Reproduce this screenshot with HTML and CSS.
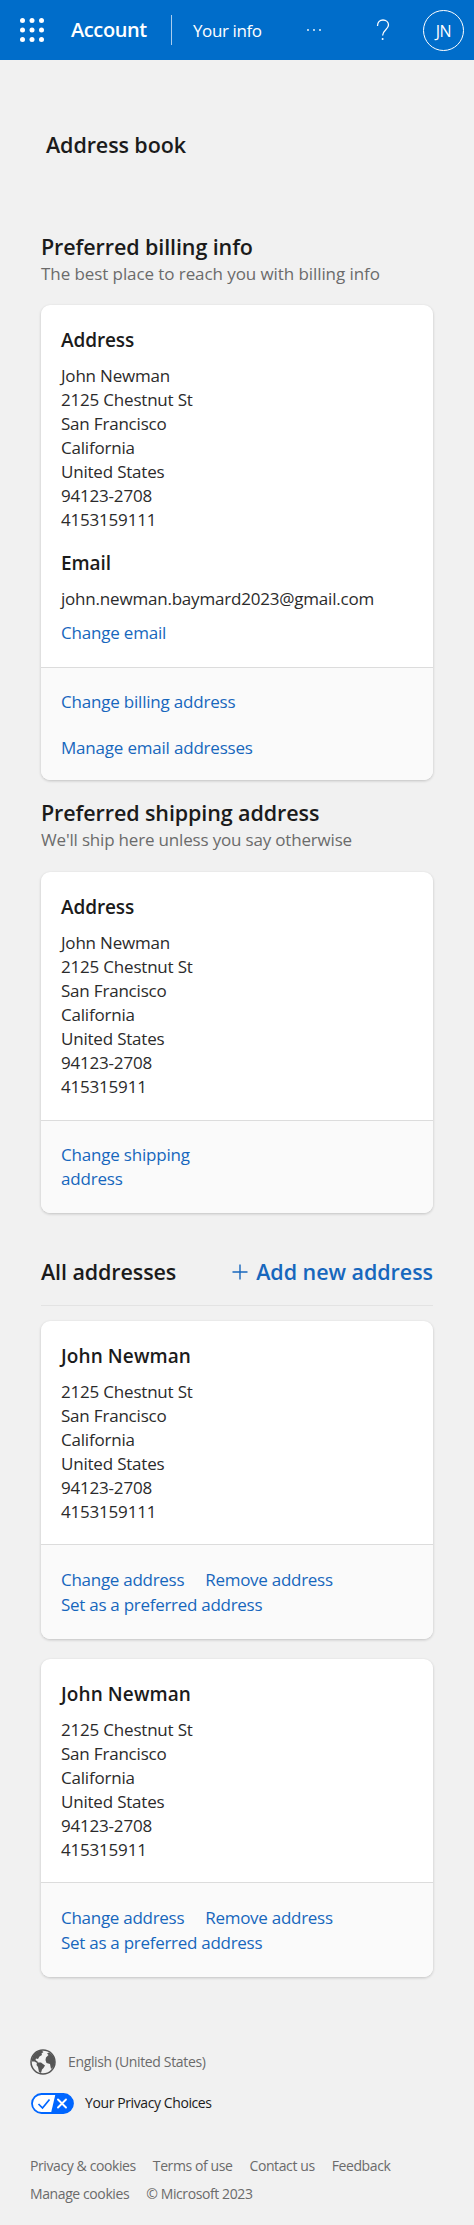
FILE: index.html
```html
<!DOCTYPE html>
<html lang="en">
<head>
<meta charset="UTF-8">
<meta name="viewport" content="width=device-width, initial-scale=1.0">
<title>Address book</title>
<link rel="stylesheet" href="styles.css">
</head>
<body>
<header class="topbar">
    <svg class="waffle" width="24" height="24" viewBox="0 0 24 24" fill="#fff">
        <circle cx="2.5" cy="2.5" r="2.5"/><circle cx="12" cy="2.5" r="2.5"/><circle cx="21.5" cy="2.5" r="2.5"/>
        <circle cx="2.5" cy="12" r="2.5"/><circle cx="12" cy="12" r="2.5"/><circle cx="21.5" cy="12" r="2.5"/>
        <circle cx="2.5" cy="21.5" r="2.5"/><circle cx="12" cy="21.5" r="2.5"/><circle cx="21.5" cy="21.5" r="2.5"/>
    </svg>
    <a class="brand">Account</a>
    <span class="separator"></span>
    <a class="nav-link">Your info</a>
    <svg class="more" width="16" height="4" viewBox="0 0 16 4" fill="#fff">
        <circle cx="2" cy="2" r=".9"/><circle cx="8" cy="2" r=".9"/><circle cx="14" cy="2" r=".9"/>
    </svg>
    <svg class="help" width="14" height="22" viewBox="0 0 14 22" fill="none" stroke="#fff" stroke-width="1.3">
        <path d="M1.500 7C1.500 3 4 1 7 1s5.500 2 5.500 5c0 4.500-5.900 5-5.900 10.500"/>
        <circle cx="6.600" cy="20" r="1" fill="#fff" stroke="none"/>
    </svg>
    <span class="avatar">JN</span>
</header>

<main class="content">
    <h1 class="page-title">Address book</h1>

    <section class="billing">
        <h2 class="heading">Preferred billing info</h2>
        <p class="subheading">The best place to reach you with billing info</p>
        <div class="card">
            <div class="card-body">
                <h3>Address</h3>
                <p>John Newman<br>2125 Chestnut St<br>San Francisco<br>California<br>United States<br>94123-2708<br>4153159111</p>
                <h3 class="email-title">Email</h3>
                <p class="email">john.newman.baymard2023@gmail.com</p>
                <a class="change-email">Change email</a>
            </div>
            <div class="card-footer stacked">
                <a>Change billing address</a>
                <a>Manage email addresses</a>
            </div>
        </div>
    </section>

    <section class="shipping">
        <h2 class="heading">Preferred shipping address</h2>
        <p class="subheading">We'll ship here unless you say otherwise</p>
        <div class="card">
            <div class="card-body">
                <h3>Address</h3>
                <p>John Newman<br>2125 Chestnut St<br>San Francisco<br>California<br>United States<br>94123-2708<br>415315911</p>
            </div>
            <div class="card-footer stacked">
                <a class="narrow">Change shipping address</a>
            </div>
        </div>
    </section>

    <section class="all">
        <div class="all-header">
            <h2 class="heading">All addresses</h2>
            <a class="add">
                <svg width="16" height="16" viewBox="0 0 16 16" fill="none" stroke="currentColor" stroke-width="1.4"><path d="M8 .5v15M.5 8h15"/></svg>
                <span>Add new address</span>
            </a>
        </div>
        <div class="card">
            <div class="card-body">
                <h3 class="name">John Newman</h3>
                <p>2125 Chestnut St<br>San Francisco<br>California<br>United States<br>94123-2708<br>4153159111</p>
            </div>
            <div class="card-footer inline">
                <a>Change address</a>
                <a>Remove address</a>
                <a>Set as a preferred address</a>
            </div>
        </div>
        <div class="card">
            <div class="card-body">
                <h3 class="name">John Newman</h3>
                <p>2125 Chestnut St<br>San Francisco<br>California<br>United States<br>94123-2708<br>415315911</p>
            </div>
            <div class="card-footer inline">
                <a>Change address</a>
                <a>Remove address</a>
                <a>Set as a preferred address</a>
            </div>
        </div>
    </section>
</main>

<footer class="footer">
    <a class="locale">
        <svg width="26" height="26" viewBox="0 0 26 26">
            <circle cx="13" cy="13" r="12" fill="none" stroke="#555" stroke-width="1.5"/>
            <path fill="#555" d="M2 10C3 5 7 2 11.500 1.500L13.500 3 11.500 4.500 12 6 9.500 7.500 8 10 6 9.500 5.500 11 8 13 7 14 4.500 12.500 2 12.500zM7 13.500L11 13.500 15 16.500 13.500 19 12 20.500 11 24 9 23 8 18 6.500 16zM16 8.500L18.500 6 17 4.500 19 3.500C22.500 5.500 25 9 25 13L23.500 18 21 20 20 15 16.500 14 15.500 11z"/>
        </svg>
        <span>English (United States)</span>
    </a>
    <a class="privacy">
        <svg width="43" height="21" viewBox="0 0 43 21">
            <rect x="1" y="1" width="41" height="19" rx="9.500" fill="#fff" stroke="#06f" stroke-width="1.800"/>
            <path d="M24.500 1H32.500a9.500 9.500 0 0 1 0 19H20z" fill="#06f"/>
            <path d="M7.500 11l4 4 7-8.500" fill="none" stroke="#06f" stroke-width="1.700"/>
            <path d="M27 6.500l8 8M35 6.500l-8 8" fill="none" stroke="#fff" stroke-width="1.900" stroke-linecap="round"/>
        </svg>
        <span>Your Privacy Choices</span>
    </a>
    <nav class="footer-links">
        <a>Privacy &amp; cookies</a>
        <a>Terms of use</a>
        <a>Contact us</a>
        <a>Feedback</a>
        <a>Manage cookies</a>
        <span>© Microsoft 2023</span>
    </nav>
</footer>
</body>
</html>
```
FILE: styles.css
```css
* {
    box-sizing: border-box;
}
body {
    margin: 0;
    background: #f1f1f1;
    color: #2b2b2b;
    font-family: "Segoe UI", "Open Sans", "Noto Sans", sans-serif;
    font-size: 17px;
    line-height: 24px;
    letter-spacing: -0.2px;
}
h1, h2, h3, p {
    margin: 0;
}
h1, h2, h3 {
    font-weight: 600;
    color: #1b1b1b;
    letter-spacing: -0.1px;
}
a {
    color: #1767bd;
    text-decoration: none;
}

/* top bar */
.topbar {
    display: flex;
    align-items: center;
    height: 60px;
    padding: 0 10px 0 20px;
    background: #006dca;
    color: #fff;
    letter-spacing: -0.4px;
}
.topbar a {
    color: #fff;
}
.brand {
    width: 75px;
    margin-left: 27px;
    font-size: 20px;
    font-weight: 600;
    white-space: nowrap;
}
.separator {
    width: 1px;
    height: 30px;
    margin-left: 25px;
    background: #a9cdee;
}
.nav-link {
    width: 70px;
    margin: 2px 0 0 21px;
    white-space: nowrap;
}
.more {
    margin-left: 43px;
}
.help {
    margin-left: 54px;
}
.avatar {
    width: 41px;
    height: 41px;
    margin-left: auto;
    border: 1.5px solid #fff;
    border-radius: 50%;
    font-size: 16px;
    line-height: 41px;
    text-align: center;
}

.content {
    padding: 0 41px;
}
.page-title {
    margin: 70px 0 0 5px;
    font-size: 21.5px;
    line-height: 30px;
}
.billing {
    margin-top: 72px;
}
.heading {
    font-size: 21.5px;
    line-height: 30px;
}
.subheading {
    color: #6b6b6b;
    letter-spacing: -0.08px;
}

.card {
    border-radius: 9px;
    background: #fff;
    box-shadow: 0 1px 3px rgba(0,0,0,.2);
    overflow: hidden;
}
.card-body {
    padding: 23px 20px 21px;
}
.card-body h3 {
    margin-bottom: 11px;
    font-size: 19px;
    line-height: 25px;
}
.card-body .name {
    letter-spacing: 0.1px;
}
.card-footer {
    padding: 22px 20px 20px;
    border-top: 1px solid #dcdcdc;
    background: #fafafa;
}
.stacked {
    display: flex;
    flex-direction: column;
    align-items: flex-start;
    gap: 22px;
}
.inline {
    display: flex;
    flex-wrap: wrap;
    column-gap: 21px;
    padding-bottom: 22px;
    line-height: 25px;
    letter-spacing: -0.28px;
}
.narrow {
    width: 150px;
}
.billing .card {
    margin-top: 19px;
}
.email-title {
    margin-top: 19px;
}
.change-email {
    display: block;
    margin: 10px 0 1px;
}

.shipping {
    margin-top: 18px;
}
.shipping .subheading {
    letter-spacing: -0.18px;
}
.shipping .card {
    margin-top: 20px;
}
.shipping .card-footer {
    padding: 22px 20px 22px;
}

.all {
    margin-top: 44px;
}
.all-header {
    display: flex;
    justify-content: space-between;
    align-items: center;
    padding-bottom: 18px;
    border-bottom: 1px solid #e3e3e3;
    margin-bottom: 15px;
}
.add {
    display: flex;
    align-items: center;
    gap: 8px;
    font-size: 21.5px;
    font-weight: 600;
    letter-spacing: -0.05px;
    white-space: nowrap;
}
.all .card-body {
    padding-bottom: 20px;
}
.all .card + .card {
    margin-top: 20px;
}

.footer {
    padding: 72px 30px 16px;
    font-size: 14px;
    letter-spacing: -0.4px;
}
.footer a, .footer span {
    color: #6b6b6b;
}
.locale, .privacy {
    display: flex;
    align-items: center;
}
.locale {
    gap: 12px;
}
.locale span {
    letter-spacing: -0.35px;
}
.privacy {
    gap: 11px;
    margin: 16px 0 0 1px;
}
.footer .privacy span {
    color: #1b1b1b;
}
.footer-links {
    display: flex;
    flex-wrap: wrap;
    column-gap: 17px;
    margin-top: 37px;
    line-height: 28px;
}
```
